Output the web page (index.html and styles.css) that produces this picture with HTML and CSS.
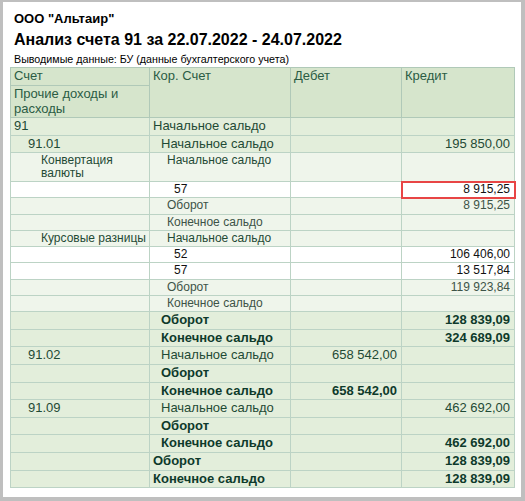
FILE: index.html
```html
<!DOCTYPE html>
<html lang="ru">
<head>
<meta charset="utf-8">
<title>Анализ счета 91</title>
<link rel="stylesheet" href="styles.css">
</head>
<body>
<div class="page">
  <div class="heading">
    <div class="org">ООО "Альтаир"</div>
    <div class="title">Анализ счета 91 за 22.07.2022 - 24.07.2022</div>
    <div class="subtitle">Выводимые данные: БУ (данные бухгалтерского учета)</div>
  </div>
  <table class="report">
    <colgroup>
      <col class="c1"><col class="c2"><col class="c3"><col class="c4">
    </colgroup>
    <thead>
      <tr class="h1"><th>Счет</th><th rowspan="2">Кор. Счет</th><th rowspan="2">Дебет</th><th rowspan="2">Кредит</th></tr>
      <tr class="h2"><th>Прочие доходы и расходы</th></tr>
    </thead>
    <tbody>
      <tr class="g"><td class="a0">91</td><td class="k0">Начальное сальдо</td><td></td><td></td></tr>
      <tr class="g"><td class="a1">91.01</td><td class="k1">Начальное сальдо</td><td></td><td class="n">195 850,00</td></tr>
      <tr class="lt dbl"><td class="a2 wrap">Конвертация валюты</td><td class="k2">Начальное сальдо</td><td></td><td></td></tr>
      <tr class="w"><td></td><td class="k3">57</td><td></td><td class="n sel">8 915,25</td></tr>
      <tr class="lt sb"><td></td><td class="k2">Оборот</td><td></td><td class="n">8 915,25</td></tr>
      <tr class="lt sb"><td></td><td class="k2">Конечное сальдо</td><td></td><td></td></tr>
      <tr class="lt"><td class="a2">Курсовые разницы</td><td class="k2">Начальное сальдо</td><td></td><td></td></tr>
      <tr class="w"><td></td><td class="k3">52</td><td></td><td class="n">106 406,00</td></tr>
      <tr class="w"><td></td><td class="k3">57</td><td></td><td class="n">13 517,84</td></tr>
      <tr class="lt sb"><td></td><td class="k2">Оборот</td><td></td><td class="n">119 923,84</td></tr>
      <tr class="lt sb"><td></td><td class="k2">Конечное сальдо</td><td></td><td></td></tr>
      <tr class="g b"><td></td><td class="k1">Оборот</td><td></td><td class="n">128 839,09</td></tr>
      <tr class="g b"><td></td><td class="k1">Конечное сальдо</td><td></td><td class="n">324 689,09</td></tr>
      <tr class="g"><td class="a1">91.02</td><td class="k1">Начальное сальдо</td><td class="n">658 542,00</td><td></td></tr>
      <tr class="g b"><td></td><td class="k1">Оборот</td><td></td><td></td></tr>
      <tr class="g b"><td></td><td class="k1">Конечное сальдо</td><td class="n">658 542,00</td><td></td></tr>
      <tr class="g"><td class="a1">91.09</td><td class="k1">Начальное сальдо</td><td></td><td class="n">462 692,00</td></tr>
      <tr class="g b"><td></td><td class="k1">Оборот</td><td></td><td></td></tr>
      <tr class="g b"><td></td><td class="k1">Конечное сальдо</td><td></td><td class="n">462 692,00</td></tr>
      <tr class="g b"><td></td><td class="k0">Оборот</td><td></td><td class="n">128 839,09</td></tr>
      <tr class="g b"><td></td><td class="k0">Конечное сальдо</td><td></td><td class="n">128 839,09</td></tr>
    </tbody>
  </table>
</div>
</body>
</html>
```

FILE: styles.css
```css
html, body {
  margin: 0;
  padding: 0;
}
body {
  background: #bfbfbf;
  font-family: "Liberation Sans", Arial, sans-serif;
  color: #000;
}
.page {
  margin: 2px 4px 0 3px;
  height: 495px;
  background: #fff;
  padding: 0 7px;
  box-sizing: border-box;
  overflow: hidden;
}
.heading {
  padding: 9px 0 0 4px;
}
.org {
  font-size: 13px;
  font-weight: bold;
  line-height: 16px;
}
.title {
  font-size: 16px;
  font-weight: bold;
  line-height: 20px;
  margin-top: 3px;
}
.subtitle {
  font-size: 10.7px;
  line-height: 13px;
  margin-top: 3px;
}
.report {
  margin-top: 1px;
  width: 504px;
  table-layout: fixed;
  border-collapse: collapse;
  font-size: 13px;
  line-height: 14px;
  color: #1f4a35;
}
.c1 { width: 139px; }
.c2 { width: 141px; }
.c3 { width: 111px; }
.c4 { width: 113px; }
.report th {
  background: #d6e5cc;
  border: 1px solid #b0c9b8;
  font-weight: normal;
  text-align: left;
  vertical-align: top;
  padding: 1px 3px;
  color: #2b5c44;
  line-height: 14.5px;
}
.report tr.h1 th { height: 15px; }
.report td {
  border: 1px solid #bcd3c5;
  padding: 1px 3px;
  vertical-align: top;
  white-space: nowrap;
  overflow: hidden;
}
.report td.wrap { white-space: normal; }
.g td { background: #e3eedb; line-height: 14.6px; height: 14.6px; }
.lt td { background: #eff5eb; font-size: 12px; line-height: 13.25px; height: 13.25px; }
.w td { background: #fff; color: #111; font-size: 12px; line-height: 13.25px; height: 13.25px; }
.report tr.dbl td { line-height: 13px; height: 26px; }
.sb td { color: #3d5347; }
.b td { font-weight: bold; color: #0e3a2b; }
.report td.a0 { padding-left: 3px; }
.report td.a1 { padding-left: 17px; }
.report td.a2 { padding-left: 30px; padding-right: 0; }
.report td.k0 { padding-left: 3px; }
.report td.k1 { padding-left: 11px; }
.report td.k2 { padding-left: 17px; }
.report td.k3 { padding-left: 24px; }
.report td.n {
  text-align: right;
  padding-right: 4px;
}
.report td.sel {
  outline: 2px solid #e84545;
  outline-offset: -1px;
}
```
